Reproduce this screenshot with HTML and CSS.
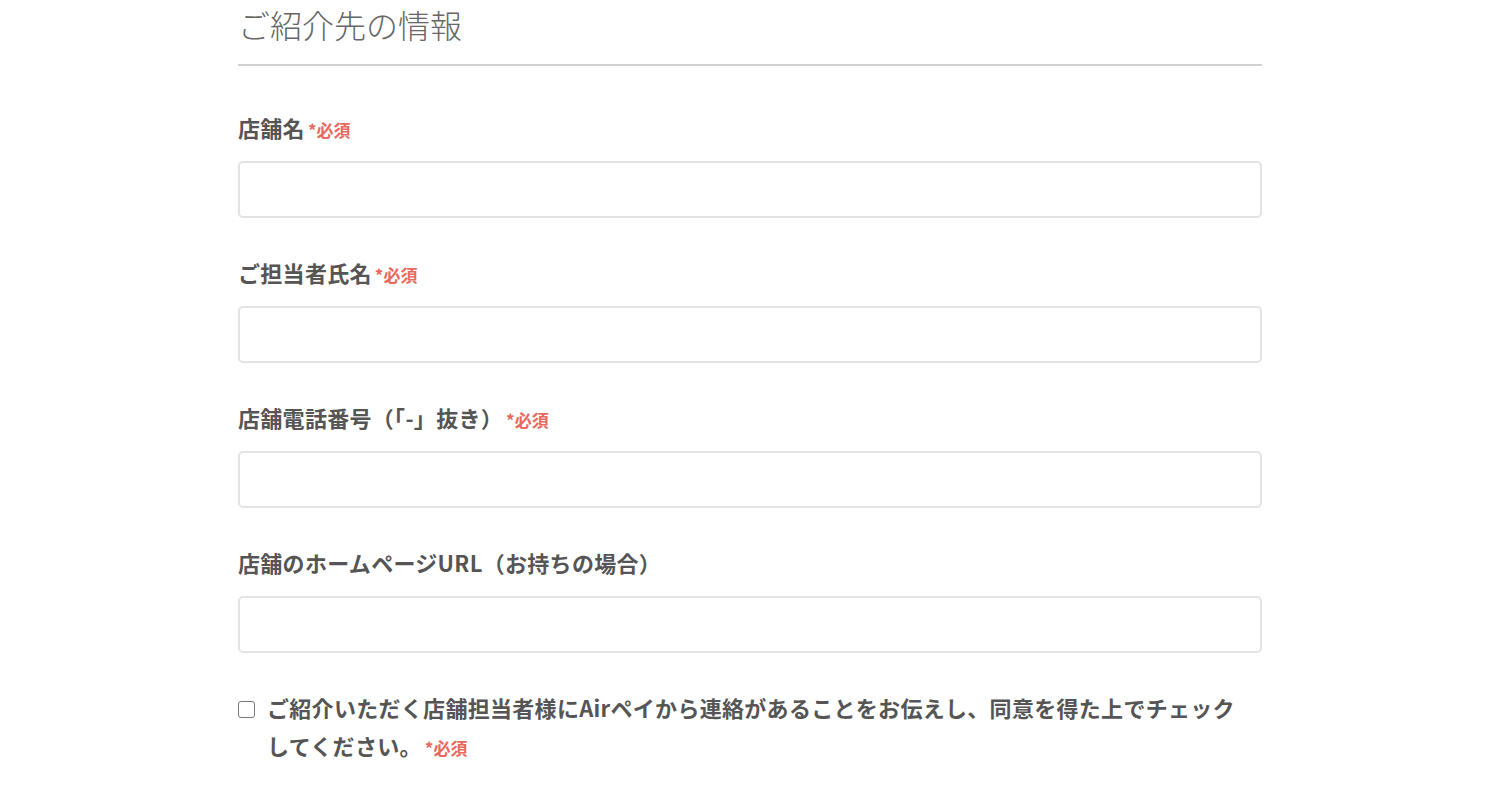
FILE: index.html
```html
<!DOCTYPE html>
<html lang="ja">
<head>
<meta charset="utf-8">
<title>ご紹介先の情報</title>
<link rel="stylesheet" href="styles.css">
</head>
<body>
<main class="form">
  <h2 class="section-title">ご紹介先の情報</h2>

  <div class="field">
    <label class="label" for="shop">店舗名<span class="req">*必須</span></label>
    <input class="input" id="shop" type="text">
  </div>

  <div class="field">
    <label class="label" for="person">ご担当者氏名<span class="req">*必須</span></label>
    <input class="input" id="person" type="text">
  </div>

  <div class="field">
    <label class="label" for="tel">店舗電話番号（「-」抜き）<span class="req req-gap">*必須</span></label>
    <input class="input" id="tel" type="text">
  </div>

  <div class="field">
    <label class="label" for="url">店舗のホームページURL（お持ちの場合）</label>
    <input class="input" id="url" type="text">
  </div>

  <label class="agree">
    <span class="check-wrap"><input class="check" type="checkbox"></span>
    <span class="agree-text">ご紹介いただく店舗担当者様にAirペイから連絡があることをお伝えし、同意を得た上でチェックしてください。<span class="req req-gap">*必須</span></span>
  </label>
</main>
</body>
</html>
```

FILE: styles.css
```css
* { box-sizing: border-box; }

html, body {
  margin: 0;
  padding: 0;
  background: #ffffff;
}

body {
  font-family: "Noto Sans CJK JP", "Noto Sans", sans-serif;
  color: #555555;
}

.form {
  width: 1024px;
  margin: 0 auto;
  padding-top: 2px;
}

.section-title {
  margin: 0 0 49px;
  padding: 0 0 17px;
  font-size: 32px;
  font-weight: 300;
  line-height: 45px;
  color: #666666;
  border-bottom: 2px solid #d0d0d0;
}

.field {
  margin-bottom: 42px;
}

.field:last-of-type {
  margin-bottom: 37px;
}

.label {
  display: block;
  height: 30px;
  font-size: 22px;
  font-weight: 700;
  line-height: 25px;
  padding-bottom: 5px;
  letter-spacing: 0.3px;
  margin-bottom: 16px;
  color: #555555;
}

.req {
  font-size: 17px;
  font-weight: 700;
  line-height: 0;
  letter-spacing: 0;
  color: #e8685c;
  margin-left: 3px;
}

.req-gap {
  margin-left: 3px;
}

.input {
  display: block;
  width: 100%;
  height: 57px;
  border: 2px solid #e3e3e3;
  border-radius: 5px;
  background: #ffffff;
  font-size: 20px;
  padding: 0 14px;
  outline: none;
}

.agree {
  display: flex;
  align-items: flex-start;
  gap: 12px;
  font-size: 22px;
  font-weight: 700;
  line-height: 38px;
  letter-spacing: 0.3px;
  color: #555555;
}

.check-wrap {
  flex: none;
  height: 38px;
  display: flex;
  align-items: center;
}

.check {
  width: 17px;
  height: 17px;
  margin: 0;
  appearance: none;
  border: 1.5px solid #777777;
  border-radius: 3px;
  background: #ffffff;
}

.agree-text {
  flex: 1;
  padding-right: 14px;
  position: relative;
  top: -2px;
}
```
